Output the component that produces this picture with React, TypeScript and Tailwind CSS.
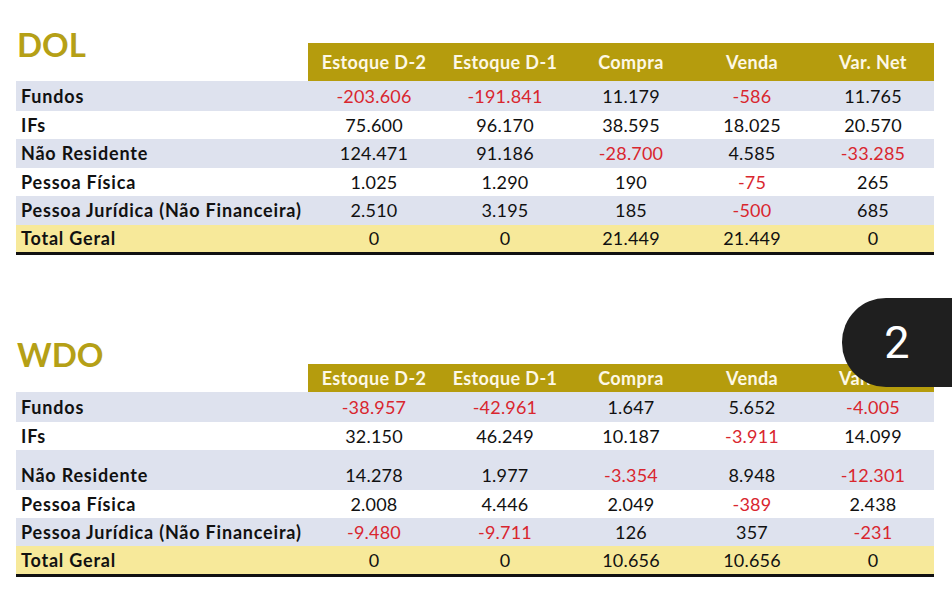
import React from "react";

type Row = { label: string; cells: string[]; h: string; bg: string };

const cols = "grid grid-cols-[292px_132px_130px_122px_120px_122px]";
const heads = ["Estoque D-2", "Estoque D-1", "Compra", "Venda", "Var. Net"];

function Table({
  title,
  headH,
  titleH,
  rows,
}: {
  title: string;
  headH: string;
  titleH: string;
  rows: Row[];
}) {
  return (
    <div className="w-[918px] ml-[16px]">
      <div className={`${cols} items-end`}>
        <div className={`${titleH} flex items-start`}>
          <span className="text-[33px] leading-none font-bold text-[#b5a016] ml-[1px] -mt-[5px]">{title}</span>
        </div>
        {heads.map((h) => (
          <div
            key={h}
            className={`${headH} bg-[#b59c0d] flex items-center justify-center text-[18px] font-bold tracking-[0.4px] text-[#fdf8e6]`}
          >
            {h}
          </div>
        ))}
      </div>
      {rows.map((r, i) => (
        <div key={i} className={`${cols} ${r.h} ${r.bg}`}>
          <div
            className={`flex items-center pl-[5px] text-[18px] font-bold tracking-[0.8px] text-[#111] ${r.h === "h-[40px]" ? "pt-[10px]" : ""}`}
          >
            {r.label}
          </div>
          {r.cells.map((c, j) => (
            <div
              key={j}
              className={`flex items-center justify-center text-[18px] tracking-[0.2px] ${c.startsWith("-") ? "text-[#d9262e]" : "text-[#111]"} ${r.h === "h-[40px]" ? "pt-[10px]" : ""}`}
            >
              {c}
            </div>
          ))}
        </div>
      ))}
      <div className="h-[3px] bg-[#111]" />
    </div>
  );
}

const lav = "bg-[#dee2ee]";
const wh = "bg-white";
const yel = "bg-[#f7e99a]";

export default function App() {
  const dol: Row[] = [
    { label: "Fundos", cells: ["-203.606", "-191.841", "11.179", "-586", "11.765"], h: "h-[30px]", bg: lav },
    { label: "IFs", cells: ["75.600", "96.170", "38.595", "18.025", "20.570"], h: "h-[28px]", bg: wh },
    { label: "Não Residente", cells: ["124.471", "91.186", "-28.700", "4.585", "-33.285"], h: "h-[29px]", bg: lav },
    { label: "Pessoa Física", cells: ["1.025", "1.290", "190", "-75", "265"], h: "h-[28px]", bg: wh },
    { label: "Pessoa Jurídica (Não Financeira)", cells: ["2.510", "3.195", "185", "-500", "685"], h: "h-[29px]", bg: lav },
    { label: "Total Geral", cells: ["0", "0", "21.449", "21.449", "0"], h: "h-[27px]", bg: yel },
  ];
  const wdo: Row[] = [
    { label: "Fundos", cells: ["-38.957", "-42.961", "1.647", "5.652", "-4.005"], h: "h-[30px]", bg: lav },
    { label: "IFs", cells: ["32.150", "46.249", "10.187", "-3.911", "14.099"], h: "h-[28px]", bg: wh },
    { label: "Não Residente", cells: ["14.278", "1.977", "-3.354", "8.948", "-12.301"], h: "h-[40px]", bg: lav },
    { label: "Pessoa Física", cells: ["2.008", "4.446", "2.049", "-389", "2.438"], h: "h-[28px]", bg: wh },
    { label: "Pessoa Jurídica (Não Financeira)", cells: ["-9.480", "-9.711", "126", "357", "-231"], h: "h-[28px]", bg: lav },
    { label: "Total Geral", cells: ["0", "0", "10.656", "10.656", "0"], h: "h-[28px]", bg: yel },
  ];
  return (
    <div
      className="relative w-[952px] h-[610px] bg-white overflow-hidden"
      style={{ fontFamily: "Lato, 'Liberation Sans', sans-serif" }}
    >
      <div className="pt-[33px]">
        <Table title="DOL" headH="h-[38px]" titleH="h-[48px]" rows={dol} />
      </div>
      <div className="pt-[88px]">
        <Table title="WDO" headH="h-[28px]" titleH="h-[49px]" rows={wdo} />
      </div>
      <div
        className="absolute left-[842px] top-[298px] w-[110px] h-[89px] rounded-l-[44px] bg-[#1f1f1f] flex items-center justify-center text-white text-[45px] leading-none"
        style={{ fontFamily: "Roboto, sans-serif" }}
      >
        2
      </div>
    </div>
  );
}
